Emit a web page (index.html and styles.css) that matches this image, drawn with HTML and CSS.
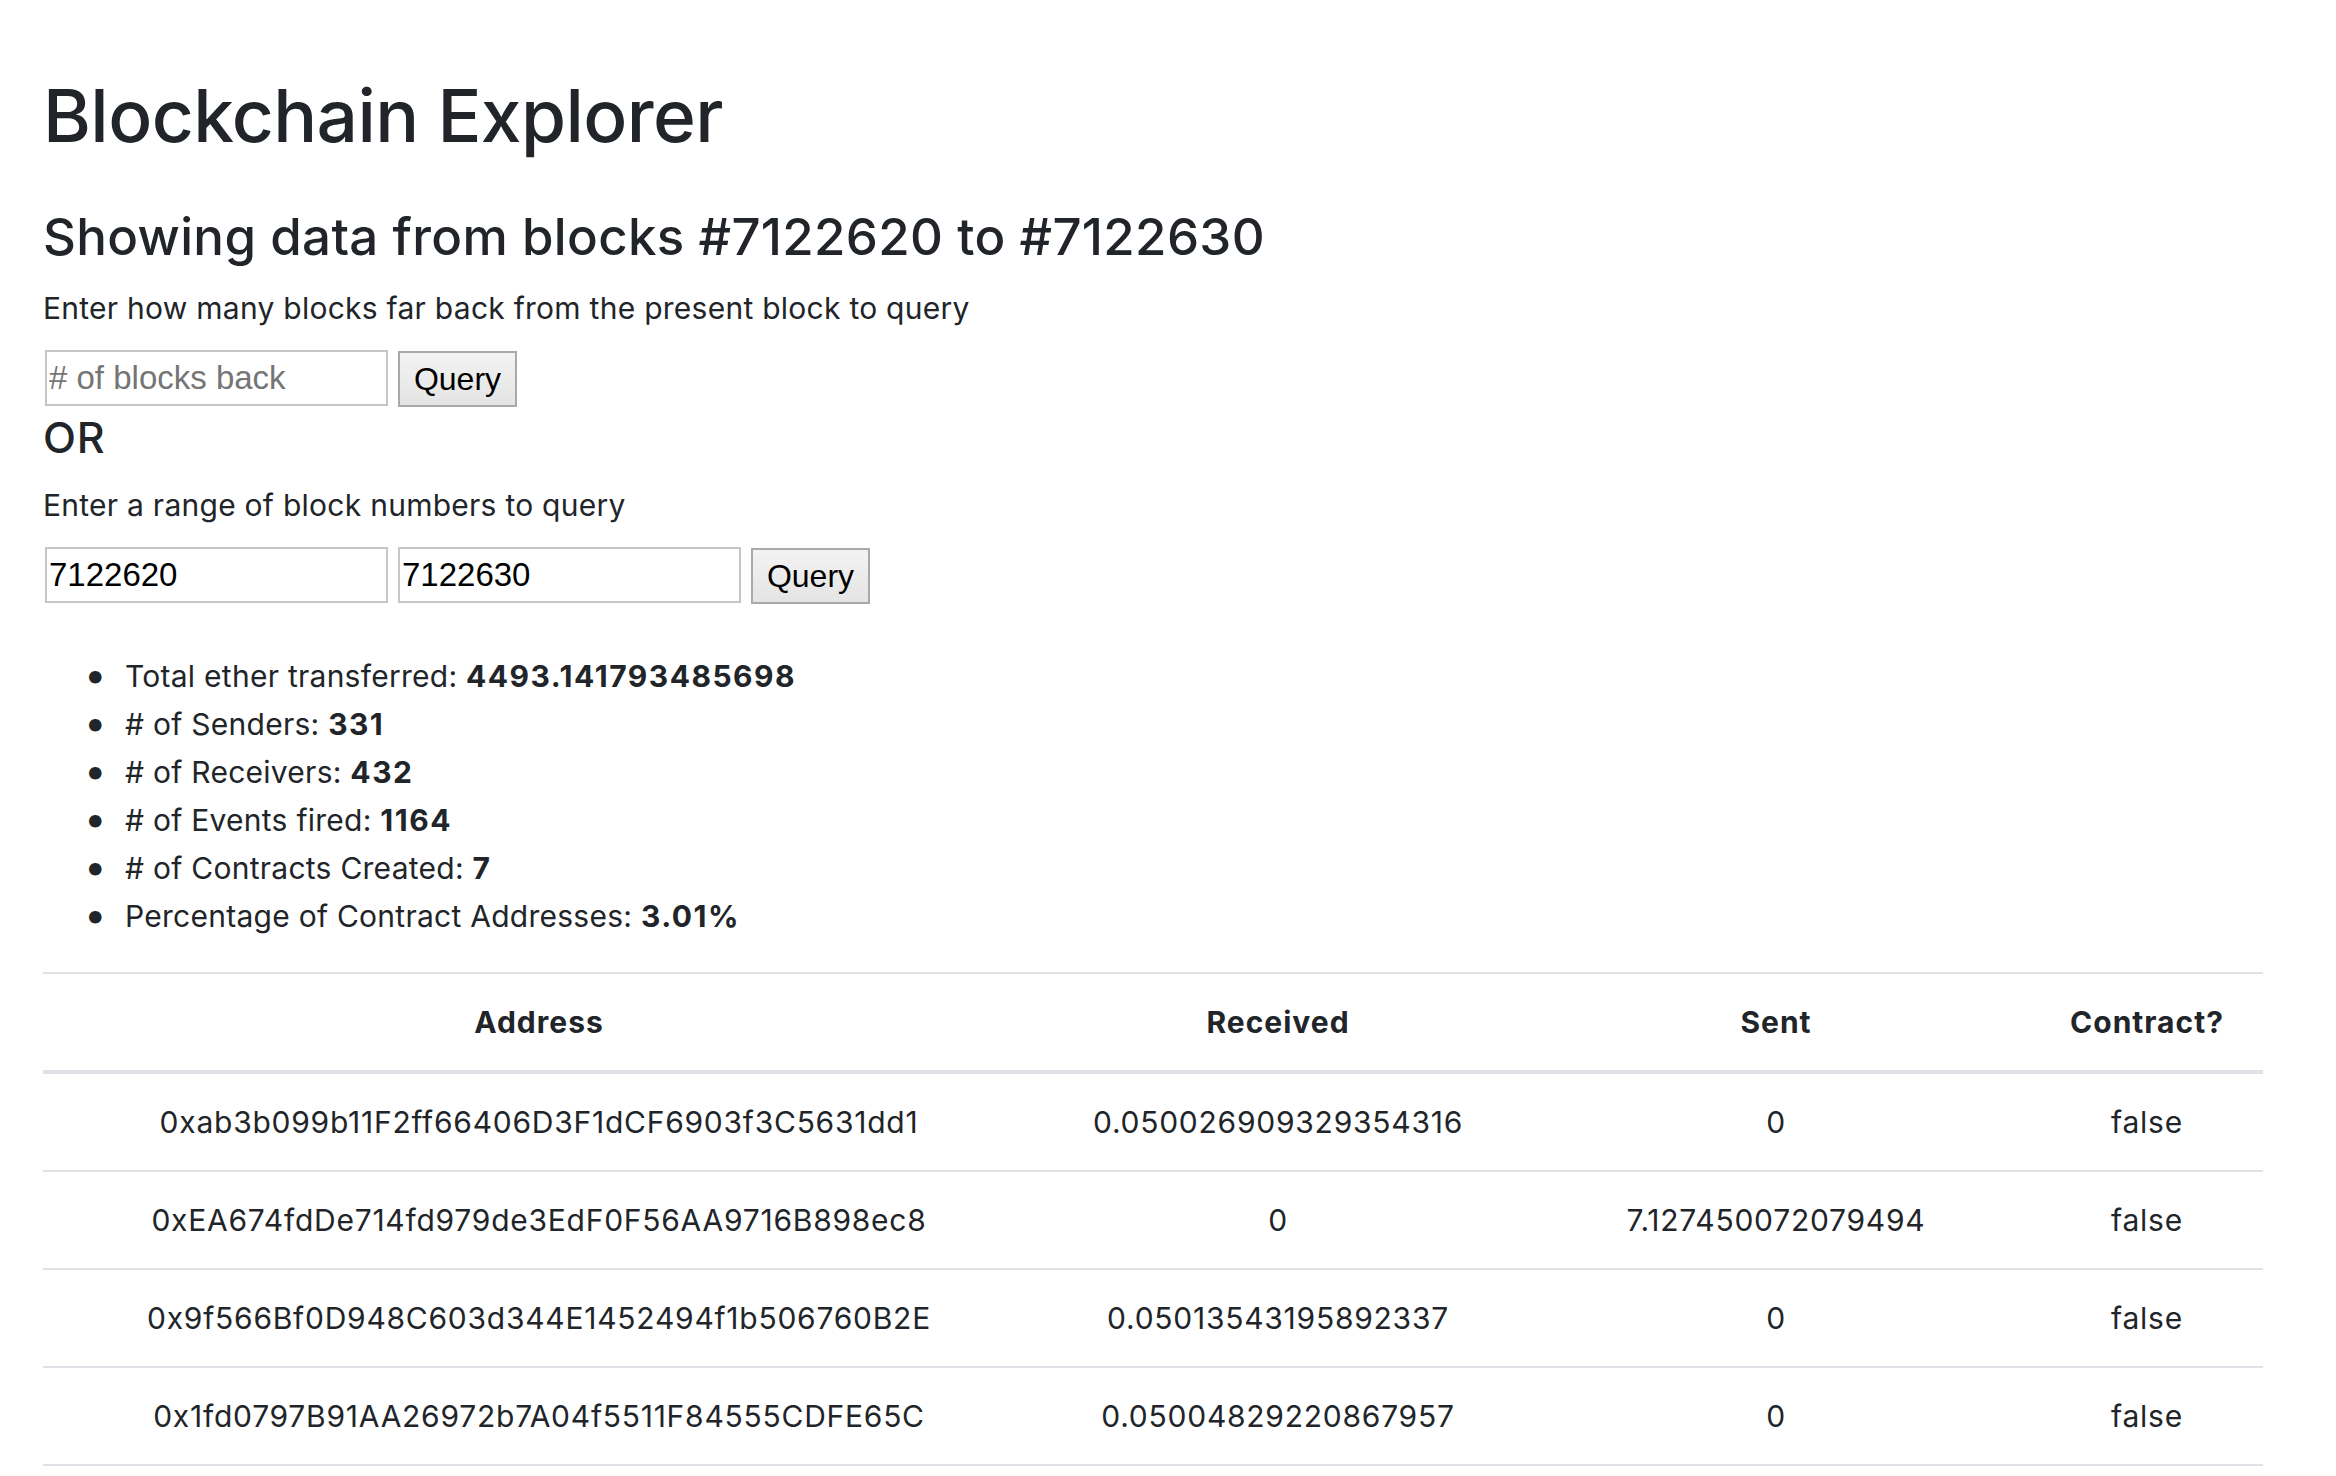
FILE: index.html
```html
<!DOCTYPE html>
<html lang="en">
<head>
<meta charset="utf-8">
<title>Blockchain Explorer</title>
<link rel="stylesheet" href="styles.css">
</head>
<body>
<div class="page">
  <h1 class="title">Blockchain Explorer</h1>
  <h3 class="subtitle">Showing data from blocks #7122620 to #7122630</h3>
  <p class="hint">Enter how many blocks far back from the present block to query</p>
  <div class="form-row">
    <input class="field" type="text" placeholder="# of blocks back">
    <button class="btn" type="button">Query</button>
  </div>
  <h4 class="or">OR</h4>
  <p class="hint hint-range">Enter a range of block numbers to query</p>
  <div class="form-row">
    <input class="field" type="text" value="7122620">
    <input class="field" type="text" value="7122630">
    <button class="btn" type="button">Query</button>
  </div>
  <ul class="stats">
    <li>Total ether transferred: <b>4493.141793485698</b></li>
    <li># of Senders: <b>331</b></li>
    <li># of Receivers: <b>432</b></li>
    <li># of Events fired: <b>1164</b></li>
    <li># of Contracts Created: <b>7</b></li>
    <li>Percentage of Contract Addresses: <b>3.01%</b></li>
  </ul>
  <table class="data">
    <colgroup>
      <col class="c-addr"><col class="c-recv"><col class="c-sent"><col class="c-contract">
    </colgroup>
    <thead>
      <tr><th>Address</th><th>Received</th><th>Sent</th><th>Contract?</th></tr>
    </thead>
    <tbody>
      <tr><td>0xab3b099b11F2ff66406D3F1dCF6903f3C5631dd1</td><td>0.050026909329354316</td><td>0</td><td>false</td></tr>
      <tr><td>0xEA674fdDe714fd979de3EdF0F56AA9716B898ec8</td><td>0</td><td>7.127450072079494</td><td>false</td></tr>
      <tr><td>0x9f566Bf0D948C603d344E1452494f1b506760B2E</td><td>0.05013543195892337</td><td>0</td><td>false</td></tr>
      <tr><td>0x1fd0797B91AA26972b7A04f5511F84555CDFE65C</td><td>0.05004829220867957</td><td>0</td><td>false</td></tr>
    </tbody>
  </table>
</div>
</body>
</html>
```
FILE: styles.css
```css
* { box-sizing: border-box; }
html, body { margin: 0; padding: 0; background: #ffffff; }
body {
  font-family: Inter, "Noto Sans", sans-serif;
  color: #212529;
  font-size: 30px;
  line-height: 48px;
}
.page {
  padding: 72px 73px 0 43px;
}
.title {
  margin: 0;
  font-size: 73px;
  line-height: 88px;
  font-weight: 500;
  letter-spacing: -0.6px;
}
.subtitle {
  margin: 46px 0 0;
  font-size: 51px;
  line-height: 61px;
  font-weight: 500;
  letter-spacing: 0.33px;
}
.hint {
  margin: 17px 0 0;
  font-size: 30px;
  line-height: 48px;
  letter-spacing: 0.26px;
}
.hint-range { margin-top: 18px; }
.form-row {
  display: flex;
  align-items: flex-start;
  gap: 10px;
  margin-top: 18px;
  padding-left: 2px;
}
.field {
  width: 343px;
  height: 56px;
  border: 2px solid #c6c6c6;
  padding: 0 2px;
  margin: 0;
  font-family: "Liberation Sans", Arial, sans-serif;
  font-size: 33px;
  color: #000;
  background: #fff;
  outline: none;
}
.field::placeholder { color: #757575; }
.btn {
  width: 119px;
  height: 56px;
  margin-top: 1px;
  border: 2px solid #a9a9a9;
  background: linear-gradient(#f3f3f3, #e4e4e4);
  font-family: "Liberation Sans", Arial, sans-serif;
  font-size: 32px;
  color: #000;
  padding: 0;
}
.or {
  margin: 4px 0 0;
  font-size: 43px;
  line-height: 52px;
  font-weight: 500;
  letter-spacing: 0.8px;
}
.stats {
  margin: 48px 0 0;
  padding-left: 82px;
  list-style: none;
  font-size: 30px;
  line-height: 48px;
  letter-spacing: 0.26px;
}
.stats li::before {
  content: "\2022";
  display: inline-block;
  width: 41px;
  margin-left: -41px;
  font-size: 40px;
  line-height: 0;
  vertical-align: -2px;
  letter-spacing: 0;
}
.stats b { font-weight: 700; letter-spacing: 1.5px; }
.data {
  margin-top: 32px;
  width: 2220px;
  border-collapse: collapse;
  table-layout: fixed;
  font-size: 30px;
  line-height: 48px;
}
.c-addr { width: 992px; }
.c-recv { width: 486px; }
.c-sent { width: 510px; }
.c-contract { width: 232px; }
.data th, .data td {
  text-align: center;
  padding: 24px 0;
  border-top: 2px solid #dee2e6;
  white-space: nowrap;
}
.data td { letter-spacing: 0.75px; }
.data th {
  font-weight: 700;
  letter-spacing: 1px;
  border-bottom: 4px solid #dee2e6;
}
.data tbody tr:last-child td { border-bottom: 2px solid #dee2e6; }
```
